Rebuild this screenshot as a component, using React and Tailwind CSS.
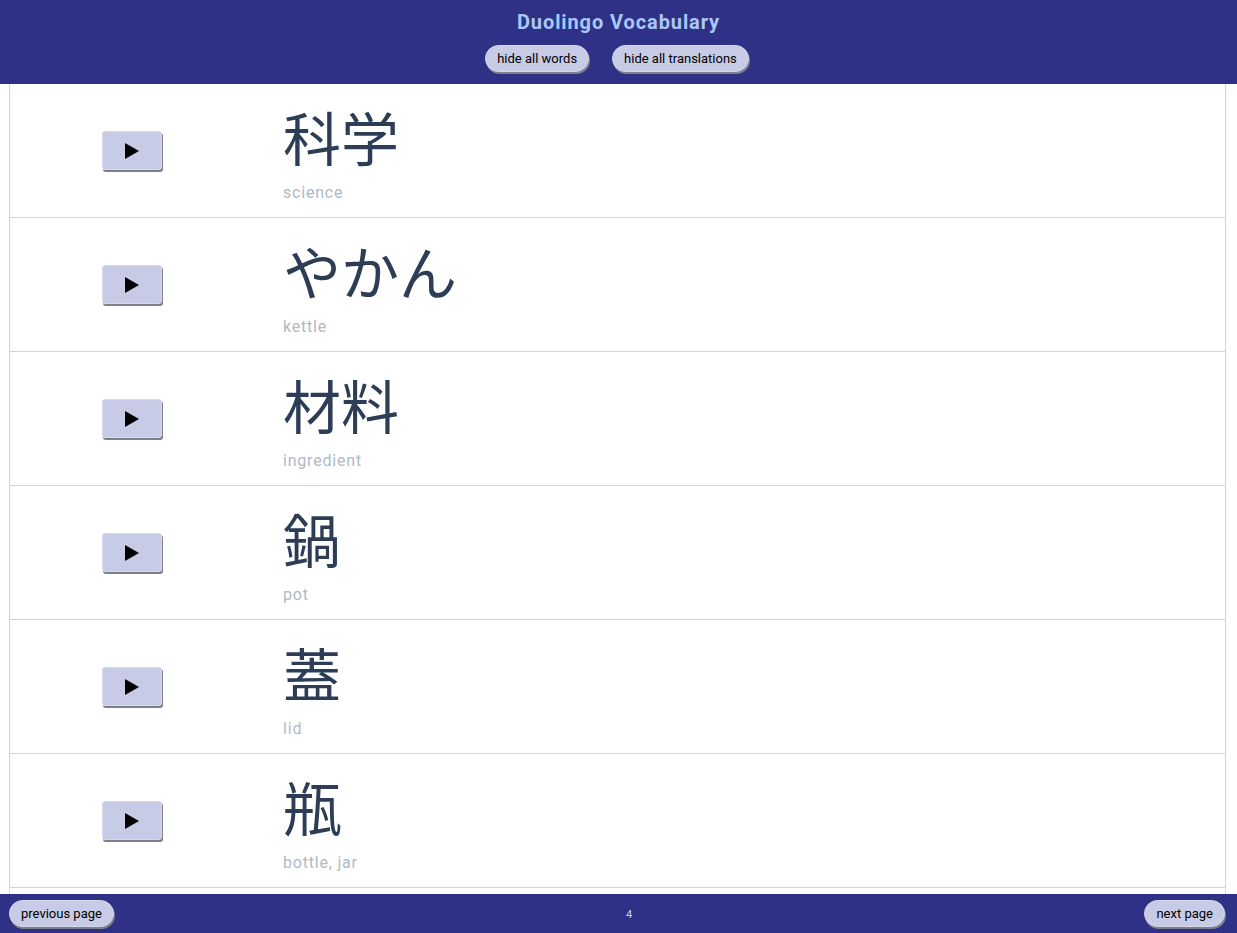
import React from "react";

const words = [
  { word: "科学", translation: "science" },
  { word: "やかん", translation: "kettle" },
  { word: "材料", translation: "ingredient" },
  { word: "鍋", translation: "pot" },
  { word: "蓋", translation: "lid" },
  { word: "瓶", translation: "bottle, jar" },
  { word: "皿", translation: "plate, dish" },
];

function PlayButton() {
  return (
    <button className="w-[60px] h-[39px] flex items-center justify-center bg-[#c8cbe6] rounded-[3px] border border-[#d6d8ec] shadow-[1px_2px_0_0_#7f7f8c]">
      <svg width="16" height="18" viewBox="0 0 16 18">
        <polygon points="1,1 15,9 1,17" fill="#000" />
      </svg>
    </button>
  );
}

function PillButton({ children }) {
  return (
    <button className="h-[27px] px-[11px] rounded-full bg-[#c8cbe6] text-[13px] text-black shadow-[1px_2px_0_0_#7f7f8c] border border-[#d6d8ec] font-['Roboto',sans-serif]">
      {children}
    </button>
  );
}

export default function App() {
  return (
    <div className="min-h-screen bg-white font-['Roboto',sans-serif]">
      <header className="h-[84px] bg-[#2f3186] flex flex-col items-center pt-[10px]">
        <h1 className="text-[20px] font-bold text-[#a9c8f7] leading-[24px] tracking-[0.9px]">
          Duolingo Vocabulary
        </h1>
        <div className="flex gap-[23px] mt-[11px] -ml-[3px]">
          <PillButton>hide all words</PillButton>
          <PillButton>hide all translations</PillButton>
        </div>
      </header>

      <div className="ml-[9px] mr-[11px] border-x border-[#d4d4d4] pb-[40px]">
        {words.map((w) => (
          <div
            key={w.word}
            className="h-[134px] border-b border-[#d4d4d4] grid grid-cols-[243px_1fr]"
          >
            <div className="flex items-center justify-center">
              <PlayButton />
            </div>
            <div className="pl-[30px] pt-[17px] flex flex-col">
              <span className="text-[58px] leading-[70px] text-[#2c3d55] font-['Noto_Sans_CJK_JP',sans-serif]">
                {w.word}
              </span>
              <span className="text-[16px] leading-[20px] mt-[12px] text-[#b0b9c6] tracking-[0.8px]">
                {w.translation}
              </span>
            </div>
          </div>
        ))}
      </div>

      <footer className="fixed bottom-0 left-0 right-0 h-[39px] bg-[#2f3186] flex items-center justify-between px-[9px] pr-[12px]">
        <PillButton>previous page</PillButton>
        <span className="text-[11px] text-[#c7d6f5] mt-[3px]">4</span>
        <PillButton>next page</PillButton>
      </footer>
    </div>
  );
}
